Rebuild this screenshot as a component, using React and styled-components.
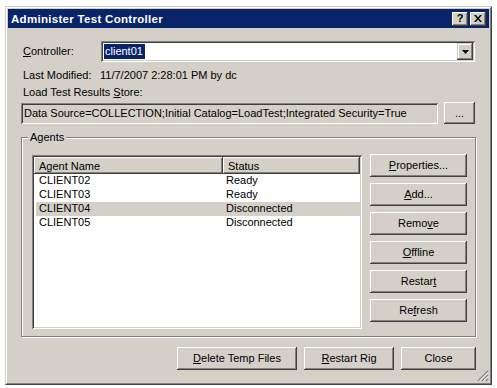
import React from 'react'
import styled, { createGlobalStyle } from 'styled-components'

const GlobalStyle = createGlobalStyle`
  body {
    margin: 0;
    background: #fff;
    font-family: Tahoma, "Liberation Sans", Arial, sans-serif;
    font-size: 11px;
    color: #000;
  }
  * { box-sizing: border-box; }
`

const Window = styled.div`
  position: relative;
  margin: 6px 0 0 5px;
  width: 487px;
  height: 379px;
  background: #d4d0c8;
  border: 1px solid;
  border-color: #d4d0c8 #404040 #404040 #d4d0c8;
  display: flex;
`
const Frame = styled.div`
  flex: 1;
  border: 1px solid;
  border-color: #fff #808080 #808080 #fff;
  padding: 1px;
  display: flex;
  flex-direction: column;
`
const TitleBar = styled.div`
  height: 19px;
  background: #0a246a;
  color: #fff;
  font-weight: bold;
  display: flex;
  align-items: center;
  justify-content: space-between;
  padding: 0 3px 0 3px;
`
const TitleText = styled.span`
  font-size: 11.5px;
  letter-spacing: 0.3px;
`
const TitleControls = styled.div`
  display: flex;
  gap: 2px;
`
const CaptionButton = styled.div`
  width: 16px;
  height: 14px;
  background: #d4d0c8;
  color: #000;
  box-shadow: inset -1px -1px #404040, inset 1px 1px #fff, inset -2px -2px #808080, inset 2px 2px #d4d0c8;
  display: flex;
  align-items: center;
  justify-content: center;
  font-size: 11px;
  font-weight: bold;
  line-height: 1;
`
const Content = styled.div`
  flex: 1;
  display: flex;
  flex-direction: column;
  padding: 0 13px;
`
const ControllerRow = styled.div`
  display: flex;
  align-items: center;
  margin-top: 13px;
  height: 21px;
`
const Label = styled.span`
  width: ${p => p.$w || 'auto'};
  flex-shrink: 0;
  padding-left: ${p => p.$pl || 0}px;
  line-height: 13px;
`
const Combo = styled.div`
  flex: 1;
  height: 21px;
  margin-right: 1px;
  background: #fff;
  box-shadow: inset 1px 1px #808080, inset -1px -1px #fff, inset 2px 2px #404040, inset -2px -2px #d4d0c8;
  display: flex;
  align-items: center;
  padding: 2px;
`
const ComboValue = styled.div`
  flex: 1;
  display: flex;
  align-items: center;
`
const Selected = styled.span`
  background: #0a246a;
  color: #fff;
  padding: 1px 2px 1px 1px;
  margin-left: 1px;
  line-height: 13px;
`
const DropButton = styled.div`
  width: 16px;
  height: 17px;
  background: #d4d0c8;
  box-shadow: inset -1px -1px #404040, inset 1px 1px #d4d0c8, inset -2px -2px #808080, inset 2px 2px #fff;
  display: flex;
  align-items: center;
  justify-content: center;
`
const InfoRow = styled.div`
  display: flex;
  margin-top: ${p => p.$mt}px;
  height: 13px;
  align-items: center;
`
const StoreRow = styled.div`
  display: flex;
  align-items: center;
  margin-top: 3px;
  height: 22px;
  gap: 6px;
`
const ReadOnlyBox = styled.div`
  width: 417px;
  height: 21px;
  background: #d4d0c8;
  box-shadow: inset 1px 1px #808080, inset -1px -1px #fff, inset 2px 2px #404040, inset -2px -2px #d4d0c8;
  padding: 0 3px;
  display: flex;
  align-items: center;
  white-space: nowrap;
  overflow: hidden;
`
const Button = styled.div`
  width: ${p => p.$w}px;
  height: ${p => p.$h || 23}px;
  flex-shrink: 0;
  background: #d4d0c8;
  box-shadow: inset -1px -1px #404040, inset 1px 1px #fff, inset -2px -2px #808080, inset 2px 2px #d4d0c8;
  display: flex;
  align-items: center;
  justify-content: center;
  padding-bottom: 1px;
  white-space: nowrap;
`
const GroupBox = styled.div`
  position: relative;
  margin-top: 13px;
  height: 200px;
  border: 1px solid #808080;
  box-shadow: inset 1px 1px #fff, 1px 1px #fff;
  display: flex;
  gap: 8px;
  padding: 17px 8px 7px 10px;
`
const Legend = styled.span`
  position: absolute;
  top: -7px;
  left: 6px;
  padding: 0 2px;
  background: #d4d0c8;
  line-height: 13px;
`
const ListView = styled.div`
  flex: 1;
  background: #fff;
  box-shadow: inset 1px 1px #808080, inset -1px -1px #fff, inset 2px 2px #404040, inset -2px -2px #d4d0c8;
  padding: 2px;
  display: flex;
  flex-direction: column;
`
const HeaderRow = styled.div`
  display: flex;
  height: 17px;
`
const HeaderCell = styled.div`
  width: ${p => p.$w ? p.$w + 'px' : 'auto'};
  flex: ${p => p.$w ? '0 0 auto' : 1};
  background: #d4d0c8;
  box-shadow: inset -1px -1px #404040, inset 1px 1px #fff, inset -2px -2px #808080;
  padding-left: 5px;
  display: flex;
  align-items: center;
`
const Row = styled.div`
  display: flex;
  height: 14px;
  margin-left: 2px;
  background: ${p => p.$sel ? '#d4d0c8' : 'transparent'};
`
const Cell = styled.div`
  width: ${p => p.$w ? p.$w + 'px' : 'auto'};
  flex: ${p => p.$w ? '0 0 auto' : 1};
  padding-left: 3px;
  line-height: 13px;
`
const SideButtons = styled.div`
  display: flex;
  flex-direction: column;
  gap: 6px;
  margin-top: -1px;
`
const BottomRow = styled.div`
  display: flex;
  justify-content: flex-end;
  gap: 7px;
  margin-top: 10px;
`
const Grip = styled.svg`
  position: absolute;
  right: 2px;
  bottom: 2px;
`

const agents = [
  { name: 'CLIENT02', status: 'Ready' },
  { name: 'CLIENT03', status: 'Ready' },
  { name: 'CLIENT04', status: 'Disconnected', sel: true },
  { name: 'CLIENT05', status: 'Disconnected' },
]

export default function App() {
  return (
    <>
      <GlobalStyle />
      <Window>
        <Frame>
          <TitleBar>
            <TitleText>Administer Test Controller</TitleText>
            <TitleControls>
              <CaptionButton>?</CaptionButton>
              <CaptionButton>
                <svg width="8" height="7" viewBox="0 0 8 7">
                  <path d="M0 0h2l2 2.5L6 0h2L5 3.5 8 7H6L4 4.5 2 7H0l3-3.5z" fill="#000" />
                </svg>
              </CaptionButton>
            </TitleControls>
          </TitleBar>
          <Content>
            <ControllerRow>
              <Label $w="80px" $pl={2}><u>C</u>ontroller:</Label>
              <Combo>
                <ComboValue><Selected>client01</Selected></ComboValue>
                <DropButton>
                  <svg width="7" height="4" viewBox="0 0 7 4">
                    <path d="M0 0h7L3.5 4z" fill="#000" />
                  </svg>
                </DropButton>
              </Combo>
            </ControllerRow>
            <InfoRow $mt={7}>
              <Label $w="79px" $pl={2}>Last Modified:</Label>
              <Label>11/7/2007 2:28:01 PM by dc</Label>
            </InfoRow>
            <InfoRow $mt={4}>
              <Label $pl={2}>Load Test Results <u>S</u>tore:</Label>
            </InfoRow>
            <StoreRow>
              <ReadOnlyBox>Data Source=COLLECTION;Initial Catalog=LoadTest;Integrated Security=True</ReadOnlyBox>
              <Button $w={31} $h={22}>...</Button>
            </StoreRow>
            <GroupBox>
              <Legend>Agents</Legend>
              <ListView>
                <HeaderRow>
                  <HeaderCell $w={189}>Agent Name</HeaderCell>
                  <HeaderCell>Status</HeaderCell>
                </HeaderRow>
                {agents.map(a => (
                  <Row key={a.name} $sel={a.sel}>
                    <Cell $w={187}>{a.name}</Cell>
                    <Cell>{a.status}</Cell>
                  </Row>
                ))}
              </ListView>
              <SideButtons>
                <Button $w={97}><span><u>P</u>roperties...</span></Button>
                <Button $w={97}><span><u>A</u>dd...</span></Button>
                <Button $w={97}><span>Remo<u>v</u>e</span></Button>
                <Button $w={97}><span><u>O</u>ffline</span></Button>
                <Button $w={97}><span>Restar<u>t</u></span></Button>
                <Button $w={97}><span>Re<u>f</u>resh</span></Button>
              </SideButtons>
            </GroupBox>
            <BottomRow>
              <Button $w={120}><span><u>D</u>elete Temp Files</span></Button>
              <Button $w={90}><span><u>R</u>estart Rig</span></Button>
              <Button $w={75}>Close</Button>
            </BottomRow>
          </Content>
        </Frame>
        <Grip width="12" height="12" viewBox="0 0 12 12">
          <path d="M11 1L1 11M11 5L5 11M11 9L9 11" stroke="#808080" strokeWidth="1.4" />
          <path d="M11 2.4L2.4 11M11 6.4L6.4 11M11 10.4L10.4 11" stroke="#fff" strokeWidth="1" />
        </Grip>
      </Window>
    </>
  )
}
